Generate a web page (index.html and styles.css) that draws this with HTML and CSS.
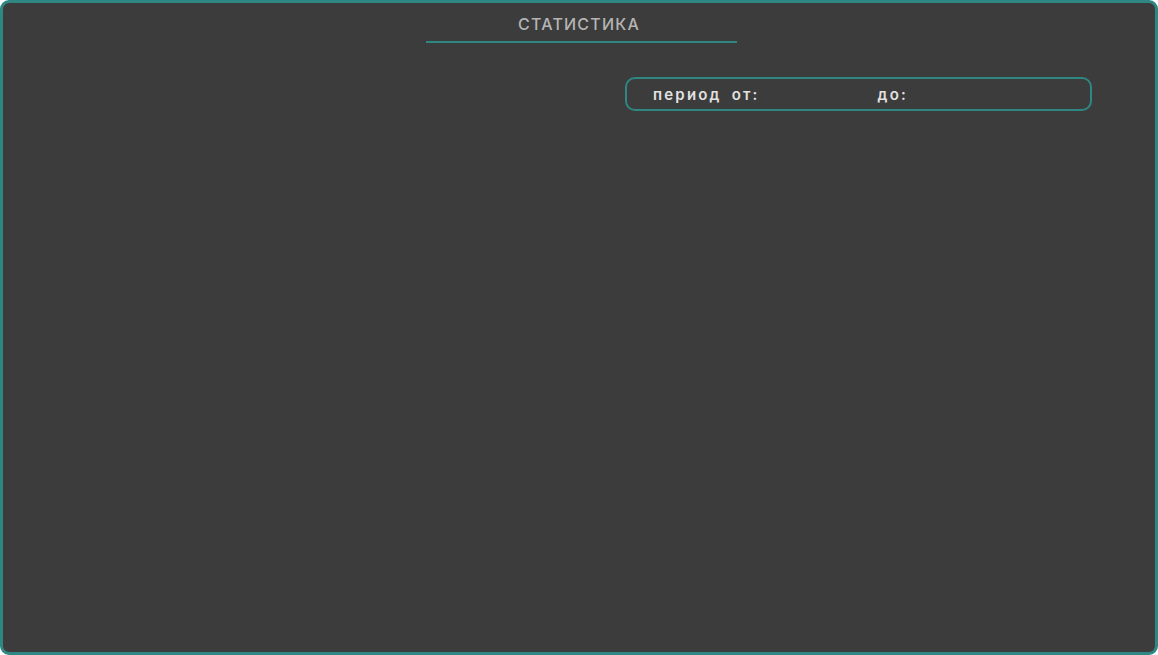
FILE: index.html
```html
<!DOCTYPE html>
<html lang="ru">
<head>
<meta charset="utf-8">
<title>Статистика</title>
<link rel="stylesheet" href="styles.css">
</head>
<body>
<div class="frame">
  <header class="header">
    <h1 class="title">СТАТИСТИКА</h1>
  </header>
  <div class="toolbar">
    <div class="period">
      <span class="label">период</span>
      <span class="label from">от:</span>
      <span class="label to">до:</span>
    </div>
  </div>
</div>
</body>
</html>
```
FILE: styles.css
```css
html, body {
  margin: 0;
  padding: 0;
  background: #ffffff;
}
.frame {
  box-sizing: border-box;
  width: 1158px;
  height: 655px;
  background: #3c3c3c;
  border: 3px solid #2e8783;
  border-radius: 9px;
  font-family: "Inter", "Open Sans", sans-serif;
}
.header {
  display: flex;
  justify-content: center;
  padding-top: 11px;
}
.title {
  margin: 0 0 0 4px;
  width: 311px;
  box-sizing: border-box;
  text-align: center;
  font-size: 16px;
  font-weight: 500;
  letter-spacing: 1.2px;
  color: #b4b4b4;
  line-height: 20px;
  padding-bottom: 7px;
  padding-right: 4px;
  border-bottom: 2px solid #2e8783;
}
.toolbar {
  display: flex;
  padding-top: 34px;
  padding-left: 622px;
}
.period {
  box-sizing: border-box;
  width: 467px;
  height: 34px;
  border: 2px solid #2e8783;
  border-radius: 10px;
  display: flex;
  align-items: center;
  padding-left: 26px;
  font-size: 15px;
  font-weight: 600;
  letter-spacing: 2.2px;
  color: #e2e2e2;
}
.from {
  margin-left: 10px;
}
.to {
  margin-left: 118px;
}
```
